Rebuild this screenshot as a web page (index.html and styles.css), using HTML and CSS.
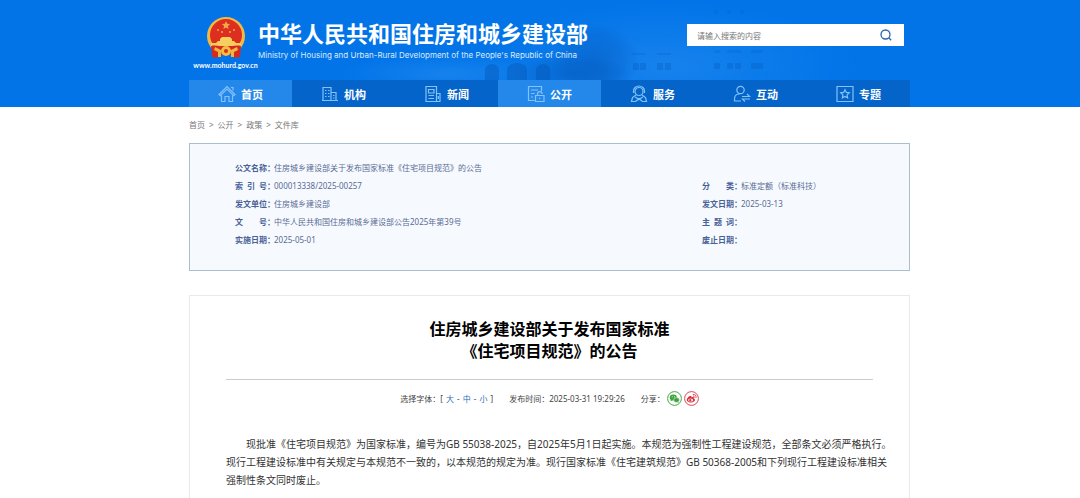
FILE: index.html
```html
<!DOCTYPE html>
<html lang="zh-CN">
<head>
<meta charset="UTF-8">
<meta name="viewport" content="width=device-width, initial-scale=1.0">
<title>住房城乡建设部关于发布国家标准《住宅项目规范》的公告</title>
<link rel="stylesheet" href="styles.css">
</head>
<body>
    <!-- Header -->
    <header class="header">
        <!-- Faint building behind the banner -->
        <svg class="header-bg" viewBox="0 0 1080 107" preserveAspectRatio="xMidYMid slice" aria-hidden="true">
            <defs>
                <radialGradient id="wall">
                    <stop offset="0" stop-color="#2a90f2" stop-opacity="0.5"/>
                    <stop offset="1" stop-color="#2a90f2" stop-opacity="0"/>
                </radialGradient>
                <radialGradient id="tree">
                    <stop offset="0" stop-color="#0459bd" stop-opacity="0.5"/>
                    <stop offset="0.6" stop-color="#0459bd" stop-opacity="0.3"/>
                    <stop offset="1" stop-color="#0459bd" stop-opacity="0"/>
                </radialGradient>
            </defs>
            <ellipse cx="665" cy="66" rx="190" ry="64" fill="url(#wall)"/>
            <ellipse cx="450" cy="74" rx="110" ry="20" fill="url(#wall)"/>
            <ellipse cx="595" cy="60" rx="44" ry="38" fill="url(#tree)"/>
            <ellipse cx="570" cy="74" rx="60" ry="20" fill="url(#tree)"/>
            <g fill="#0458b8" fill-opacity="0.45">
                <path d="M485 80V70a7 6 0 0 1 14 0v10zM507 80V70a10 7 0 0 1 20 0v10zM536 80V70a7 6 0 0 1 14 0v10z"/>
                <path fill-opacity="0.3" d="M633 63h6v7h-6zM640 63h6v7h-6zM657 63h6v7h-6zM665 63h6v7h-6zM714 63h6v6h-6zM727 63h6v6h-6zM735 63h6v6h-6zM751 63h12v6h-12z"/>
                <path fill-opacity="0.2" d="M632 53h14v2h-14zM657 53h14v2h-14zM714 50h6v3h-6zM727 50h14v3h-14zM751 50h12v3h-12zM714 10h4v4h-4zM727 10h4v4h-4zM740 10h4v4h-4z"/>
            </g>
        </svg>
        <div class="wrap header-inner">
            <div class="brand">
                <a class="logo" href="#">
                    <svg width="40" height="43" viewBox="0 0 40 43" aria-hidden="true">
                        <circle cx="20" cy="20" r="19" fill="#f2b945"/>
                        <circle cx="20" cy="19" r="16" fill="#dc2f20"/>
                        <path d="M20 5l1.200 2.800 3 .2-2.300 2 .7 3L20 11.400 17.400 13l.7-3-2.300-2 3-.2z" fill="#f7a948"/>
                        <g fill="#f7a948">
                            <circle cx="12" cy="14" r="1"/><circle cx="28" cy="14" r="1"/>
                            <circle cx="16" cy="16" r="1"/><circle cx="24" cy="16" r="1"/>
                        </g>
                        <path d="M14 23l2-2h8l2 2v2h2l2 2h5v3H5v-3h5l2-2h2z" fill="#f7cf5e"/>
                        <path d="M5 30c5-1 10 0 15 2 5-2 10-3 15-2l-1 11c-4 1-7 1-9-2H15c-2 3-5 3-9 2z" fill="#d62a20"/>
                        <path d="M9 31l6 3v7h-3v-5l-4-2zM31 31l-6 3v7h3v-5l4-2z" fill="#efb53e"/>
                        <circle cx="20" cy="35" r="5" fill="#f2bd42"/>
                        <circle cx="20" cy="35" r="2" fill="#d9301f"/>
                    </svg>
                    <span class="logo-url">www.mohurd.gov.cn</span>
                </a>
                <div class="site-name">
                    <p class="site-title">中华人民共和国住房和城乡建设部</p>
                    <p class="site-sub">Ministry of Housing and Urban-Rural Development of the People's Republic of China</p>
                </div>
            </div>
            <form class="search">
                <input class="search-input" type="text" placeholder="请输入搜索的内容" aria-label="搜索">
                <button class="search-btn" type="button" aria-label="搜索">
                    <svg width="12" height="12" viewBox="0 0 12 12" fill="none" stroke="#2368ae" stroke-width="1.300"><circle cx="5.500" cy="5.500" r="4.500"/><path d="M8.700 8.700l2.500 2.500"/></svg>
                </button>
            </form>
        </div>
        <!-- Main nav -->
        <nav class="wrap nav">
            <a href="#" class="nav-item active">
                <svg class="nav-icon" viewBox="0 0 18 18"><path d="M1 9.500L9 1.500l8 8-1.200 1.200L9 4l-6.800 6.700zM3.500 10.500v6H7v-5h4v5h3.500v-6M13 2.500h2v3"/></svg>首页</a>
            <a href="#" class="nav-item">
                <svg class="nav-icon" viewBox="0 0 18 18"><path d="M2 15.500v-13h8v13M10 7.500h5v8M1 15.500h16M4 5.500h1.500M7 5.500h1.500M4 8.500h1.500M7 8.500h1.500M4 11.500h1.500M7 11.500h1.500M12 10.500h1.500M12 13h1.500"/></svg>机构</a>
            <a href="#" class="nav-item">
                <svg class="nav-icon" viewBox="0 0 18 18"><path d="M2 1.500h10.500v15H2zM12.500 8.500H16v8h-3.500M4.500 4.500H10v3.500H4.500zM4.500 10.500H10M4.500 13.500H10M14.300 11v3"/></svg>新闻</a>
            <a href="#" class="nav-item active">
                <svg class="nav-icon" viewBox="0 0 18 18"><path d="M7.500 15.500h-6v-14h13V6M4 5h7M4 8.500h3.500M4 12h2M8.500 10.500H17v6H8.500zM10.500 10.500V9a2.300 2.300 0 0 1 4.600 0M12.700 12.700v1.600"/></svg>公开</a>
            <a href="#" class="nav-item">
                <svg class="nav-icon" viewBox="0 0 18 18"><circle cx="9" cy="6.500" r="4"/><path d="M3.500 8V6a5.500 5 0 0 1 11 0v2M6 10l-3.500 2.500L1.500 16.500h4l3.500-3 3.500 3h4l-1-4L12 10M5 12l8 4.500M13 12l-8 4.500"/></svg>服务</a>
            <a href="#" class="nav-item">
                <svg class="nav-icon" viewBox="0 0 18 18"><circle cx="7.500" cy="5" r="3.700"/><path d="M8 16H1.500v-2c0-3 2-5 5-5M9 11.500h7.500L14 9M17 14H9.500l2.500 2.500"/></svg>互动</a>
            <a href="#" class="nav-item">
                <svg class="nav-icon" viewBox="0 0 18 18"><path d="M1 1.500h16v15H1zM9 4.700l1.300 2.700 3 .4-2.200 2.100.5 3L9 11.500l-2.600 1.400.5-3-2.200-2.100 3-.4z"/></svg>专题</a>
        </nav>
    </header>

    <main class="wrap main">
        <!-- Breadcrumb -->
        <div class="crumbs"><a href="#">首页</a> &gt; <a href="#">公开</a> &gt; <a href="#">政策</a> &gt; <a href="#">文件库</a></div>

        <!-- Document info -->
        <div class="info">
            <dl class="info-col">
                <dt>公文名称</dt><dd>住房城乡建设部关于发布国家标准《住宅项目规范》的公告</dd>
                <dt>索 引 号</dt><dd>000013338/2025-00257</dd>
                <dt>发文单位</dt><dd>住房城乡建设部</dd>
                <dt>文 号</dt><dd>中华人民共和国住房和城乡建设部公告2025年第39号</dd>
                <dt>实施日期</dt><dd>2025-05-01</dd>
            </dl>
            <dl class="info-col">
                <dt>分 类</dt><dd>标准定额（标准科技）</dd>
                <dt>发文日期</dt><dd>2025-03-13</dd>
                <dt>主 题 词</dt><dd></dd>
                <dt>废止日期</dt><dd></dd>
            </dl>
        </div>

        <!-- Article -->
        <article class="article">
            <h1 class="title">住房城乡建设部关于发布国家标准<br>《住宅项目规范》的公告</h1>
            <div class="meta">
                <span class="sizes">选择字体：[ <a href="#">大</a> - <a href="#">中</a> - <a href="#">小</a> ]</span>
                <span>发布时间：2025-03-31 19:29:26</span>
                <span class="share">分享：
                    <a href="#" aria-label="微信">
                        <svg width="15" height="15" viewBox="0 0 15 15"><circle cx="7.500" cy="7.500" r="6.900" fill="#fff" stroke="#45a846"/><ellipse cx="6.300" cy="6.500" rx="3.600" ry="3" fill="#3ba43d"/><path d="M4 8l-.5 2.200L6 9zM11 10l.8 1.800L9.500 11z" fill="#3ba43d"/><ellipse cx="9.500" cy="9" rx="2.900" ry="2.400" fill="#3ba43d" stroke="#fff" stroke-width=".5"/><g fill="#fff"><circle cx="5.200" cy="5.700" r=".5"/><circle cx="7.500" cy="5.700" r=".5"/></g></svg>
                    </a>
                    <a href="#" aria-label="微博">
                        <svg width="15" height="15" viewBox="0 0 15 15"><circle cx="7.500" cy="7.500" r="6.900" fill="#fff" stroke="#df4350"/><path d="M2.800 9c0-2 3-4.600 4.400-3.800.5.300.4.900.3 1.200 1.500-.6 2.700-.3 2.300 1 2.800 1.200.4 4-3.200 4-2 0-3.800-.9-3.800-2.400z" fill="#d92c3a"/><ellipse cx="6.600" cy="9" rx="2.500" ry="1.600" fill="#fff"/><circle cx="6.300" cy="9.200" r="1.100" fill="#d92c3a"/><path d="M8.800 3.500c2.200-.5 3.800 1.300 3.100 3.400M9 5.200c1-.2 1.600.5 1.300 1.400" fill="none" stroke="#d92c3a" stroke-width=".9"/></svg>
                    </a>
                </span>
            </div>
            <p class="text">现批准《住宅项目规范》为国家标准，编号为GB 55038-2025，自2025年5月1日起实施。本规范为强制性工程建设规范，全部条文必须严格执行。<br>现行工程建设标准中有关规定与本规范不一致的，以本规范的规定为准。现行国家标准《住宅建筑规范》GB 50368-2005和下列现行工程建设标准相关<br>强制性条文同时废止。</p>
        </article>
    </main>
</body>
</html>
```
FILE: styles.css
```css
/* Basic styling for the page */
* {
    box-sizing: border-box;
}

body {
    margin: 0;
    min-height: 100vh;
    display: flex;
    flex-direction: column;
    font-family: "Noto Sans", "Noto Sans CJK SC", sans-serif;
    font-size: 8px;
    color: #444;
    background: #fff;
}

a {
    color: inherit;
    text-decoration: none;
}

p, dl, dd, h1 {
    margin: 0;
}

.wrap {
    width: 100%;
    max-width: 721px;
    margin: 0 auto;
}

/* Header */
.header {
    position: relative;
    padding-left: 19px;
    background: #0274e8;
    color: #fff;
}

.header-bg {
    position: absolute;
    left: 0;
    top: 0;
    width: 100%;
    height: 100%;
}

.header-inner {
    position: relative;
    display: flex;
    justify-content: space-between;
    align-items: flex-start;
    height: 80px;
    padding: 16px 6px 0;
}

.brand {
    display: flex;
}

.logo {
    display: flex;
    flex-direction: column;
    align-items: center;
    width: 61px;
    margin-right: 2px;
}

.logo-url {
    font-family: Lato, sans-serif;
    font-size: 7px;
    font-weight: bold;
    line-height: 12px;
    white-space: nowrap;
}

.site-title {
    font-size: 22px;
    font-weight: bold;
    line-height: 34px;
}

.site-sub {
    font-family: Inter, Arial, sans-serif;
    font-size: 8px;
    line-height: 10px;
    color: #d9ebff;
}

/* Search box */
.search {
    display: flex;
    width: 217px;
    height: 22px;
    margin-top: 8px;
    background: #fff;
}

.search-input {
    flex: 1;
    min-width: 0;
    padding: 0 10px;
    border: none;
    background: none;
    font-family: inherit;
    font-size: 8px;
}

.search-input::placeholder {
    color: #777;
}

.search-btn {
    display: flex;
    align-items: center;
    justify-content: center;
    width: 37px;
    padding: 0;
    border: none;
    background: none;
}

/* Main nav */
.nav {
    position: relative;
    display: flex;
    background: #0464c9;
}

.nav-item {
    flex: 1;
    display: flex;
    align-items: center;
    justify-content: center;
    gap: 5px;
    height: 27px;
    font-size: 11px;
    font-weight: bold;
}

.nav-item.active {
    background: #2388ea;
}

.nav-icon {
    width: 18px;
    height: 18px;
    fill: none;
    stroke: #83c2fa;
    stroke-width: 1.2;
}

/* Page body */
.main {
    flex: 1;
    display: flex;
    flex-direction: column;
    max-width: 740px;
    padding-left: 19px;
}

.crumbs {
    display: flex;
    gap: 4px;
    padding: 12px 0;
    line-height: 12px;
    color: #777;
}

/* Document info box */
.info {
    display: flex;
    justify-content: space-between;
    min-height: 128px;
    padding: 15px 44px 20px 45px;
    border: 1px solid #a9bfd0;
    background: #f6faff;
    color: #5a6a94;
}

.info-col {
    display: grid;
    grid-template-columns: 32px 1fr;
    column-gap: 7px;
    grid-auto-rows: 18px;
    line-height: 18px;
}

.info-col + .info-col {
    width: 163px;
    padding-top: 18px;
}

.info-col dt {
    position: relative;
    font-weight: bold;
    color: #4a6196;
    text-align-last: justify;
}

.info-col dt::after {
    content: "：";
    position: absolute;
    left: 100%;
}

/* Article */
.article {
    flex: 1;
    margin-top: 24px;
    padding: 22px 36px 0;
    border: 1px solid #e9e9e9;
    border-bottom: none;
}

.title {
    padding-bottom: 17px;
    border-bottom: 1px solid #ccc;
    font-size: 16px;
    line-height: 22px;
    text-align: center;
    color: #000;
}

.meta {
    display: flex;
    justify-content: center;
    align-items: center;
    gap: 16px;
    padding-top: 11px;
}

.meta a {
    color: #2a6fb8;
}

.sizes a {
    padding: 0 1px;
}

.share {
    display: flex;
    align-items: center;
    gap: 2px;
}

.share svg {
    display: block;
}

/* The text runs a little into the right padding */
.text {
    margin-top: 29px;
    margin-right: -30px;
    font-size: 10px;
    line-height: 18px;
    text-indent: 2em;
    color: #333;
}
```
